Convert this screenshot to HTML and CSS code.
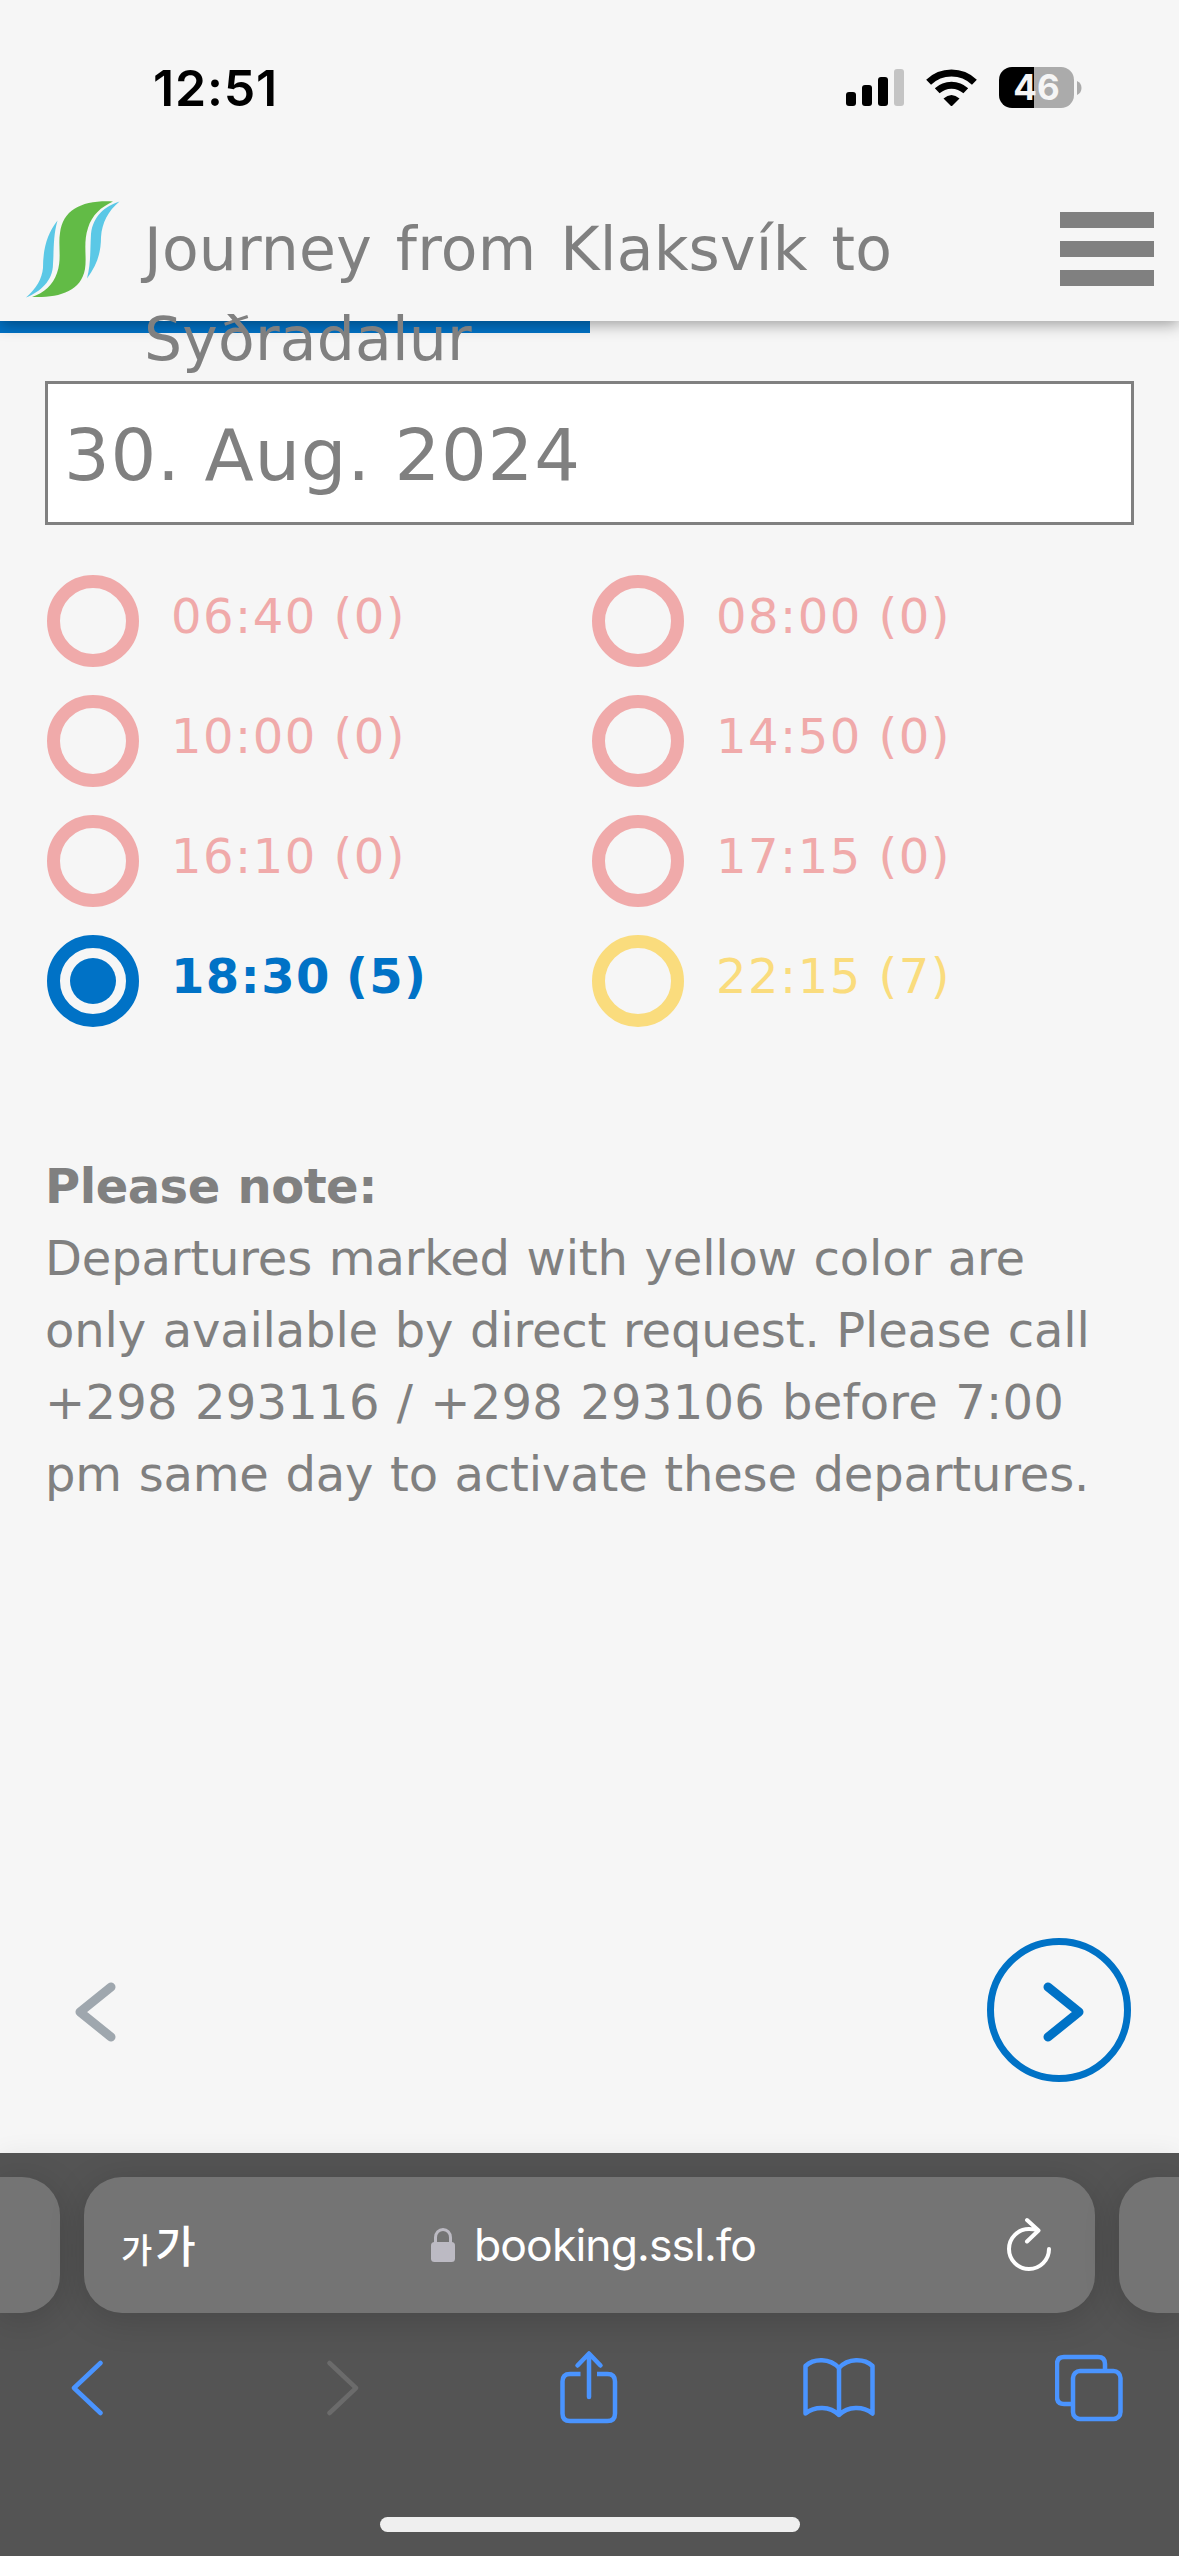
FILE: index.html
```html
<!DOCTYPE html>
<html lang="en">
<head>
	<meta charset="utf-8">
	<title>Journey from Klaksvík to Syðradalur</title>
	<link rel="stylesheet" href="styles.css">
</head>
<body>
<div class="statusbar">
	<span class="clock">12:51</span>
	<div class="status-icons">
		<svg class="signal" width="58" height="37" viewBox="0 0 58 37">
			<rect x="0" y="23" width="10" height="14" rx="3"/>
			<rect x="16" y="16" width="10" height="21" rx="3"/>
			<rect x="32" y="8" width="10" height="29" rx="3"/>
			<rect x="48" y="0" width="10" height="37" rx="3" fill="#c4c4c4"/>
		</svg>
		<svg class="wifi" width="51" height="37" viewBox="0 0 51 37">
			<path d="M2.6 13.2A33 33 0 0 1 48.4 13.2" fill="none" stroke="#000" stroke-width="7"/>
			<path d="M11.2 21.8A21 21 0 0 1 39.8 21.8" fill="none" stroke="#000" stroke-width="7"/>
			<path d="M17.5 29.5Q25.5 22.5 33.5 29.5L25.5 37.5Z"/>
		</svg>
		<div class="battery"><span>46</span></div>
		<svg class="battery-tip" width="5" height="14" viewBox="0 0 5 14"><path d="M0 0Q4.5 2 4.5 7T0 14Z" fill="#ababab"/></svg>
	</div>
</div>

<div class="header">
	<svg class="logo" width="94" height="97" viewBox="0 0 94 97">
		<path d="M31.500 19.500C21 33 17 48 17 67C16 78 10 88 0 96.500C14 91 27 80 27 63C28 50 27 35 31.500 19.500Z" fill="#5bc8e6"/>
		<path d="M93.500 .5C79 5 67 15 65 33C64 50 65 62 61 77.500C71 64 75 52 75 36C76 22 82 10 93.500 .5Z" fill="#5bc8e6"/>
		<path d="M87 .5C57 -1 37 8 34 32C32 45 36 58 31 72C27 84 18 92 6 96C32 97 55 91 59 68C61 55 57 42 62 27C66 14 75 6 87 .5Z" fill="#62bb46"/>
	</svg>
	<h1>Journey from Klaksvík to Syðradalur</h1>
	<div class="menu"><i></i><i></i><i></i></div>
</div>
<div class="progress"><div class="progress-done"></div></div>

<div class="content">
	<div class="date">30. Aug. 2024</div>
	<div class="times">
		<div class="time full"><span class="radio"></span><label>06:40 (0)</label></div>
		<div class="time full"><span class="radio"></span><label>08:00 (0)</label></div>
		<div class="time full"><span class="radio"></span><label>10:00 (0)</label></div>
		<div class="time full"><span class="radio"></span><label>14:50 (0)</label></div>
		<div class="time full"><span class="radio"></span><label>16:10 (0)</label></div>
		<div class="time full"><span class="radio"></span><label>17:15 (0)</label></div>
		<div class="time on"><span class="radio"></span><label>18:30 (5)</label></div>
		<div class="time request"><span class="radio"></span><label>22:15 (7)</label></div>
	</div>
	<div class="note">
		<b>Please note:</b><br>
		Departures marked with yellow color are<br>
		only available by direct request. Please call<br>
		<span class="phones">+298 293116 / +298 293106 before 7:00</span><br>
		pm same day to activate these departures.
	</div>
	<div class="pager">
		<div class="prev">
			<svg width="42" height="60" viewBox="0 0 42 60"><path d="M36 5L5 30L36 55"/></svg>
		</div>
		<div class="next">
			<svg width="42" height="60" viewBox="0 0 42 60"><path d="M5 5L36 30L5 55"/></svg>
		</div>
	</div>
</div>

<div class="browser">
	<div class="tabs">
		<div class="tab side"></div>
		<div class="tab address">
			<div class="lang"><small>가</small><span>가</span></div>
			<div class="url">
				<svg width="24" height="34" viewBox="0 0 24 34">
					<path d="M4.500 16V9.500a7.500 8 0 0 1 15 0V16" fill="none" stroke="#bcbac3" stroke-width="3"/>
					<rect x="0" y="14" width="24" height="20" rx="3.500" fill="#bcbac3"/>
				</svg>
				<span>booking.ssl.fo</span>
			</div>
			<svg class="reload" width="46" height="56" viewBox="0 0 46 56">
				<path d="M32 13.500C28 12 25.500 12 23 12A20 20 0 1 0 43 32M21 3L32.500 13.500L21 24.500"/>
			</svg>
		</div>
		<div class="tab side"></div>
	</div>
	<div class="tools">
		<svg width="32" height="56" viewBox="0 0 32 56"><path d="M29.500 3L3 28L29.500 53"/></svg>
		<svg class="off" width="32" height="56" viewBox="0 0 32 56"><path d="M2.500 3L29 28L2.500 53"/></svg>
		<svg class="share" width="58" height="74" viewBox="0 0 58 74"><path class="butt" d="M20.500 24H10Q2.500 24 2.500 31.500V63.500Q2.500 71 10 71H47.500Q55 71 55 63.500V31.500Q55 24 47.500 24H37"/><path d="M29 47V4M17.500 15.500L29 3.500L40.500 15.500"/></svg>
		<svg width="72" height="62" viewBox="0 0 72 62"><path d="M36 11C27 1 11 1 2.500 9V56.500C12 49 27 49 36 58C45 49 60 49 69.500 56.500V9C61 1 45 1 36 11V58"/></svg>
		<svg width="68" height="68" viewBox="0 0 68 68"><path class="butt" d="M50 16V10Q50 3 43 3H9Q2 3 2 10V43Q2 50 9 50H17"/><rect x="18" y="17" width="47.500" height="48" rx="7"/></svg>
	</div>
	<div class="home"></div>
</div>
</body>
</html>
```

FILE: styles.css
```css
*{
	margin: 0;
	padding: 0;
	box-sizing: border-box;
}
body{
	width: 1179px;
	height: 2556px;
	overflow: hidden;
	display: flex;
	flex-direction: column;
	background: #f6f6f6;
	color: #808080;
	font-family: "DejaVu Sans", Verdana, sans-serif;
}
svg{
	display: block;
	flex: none;
}

/* status bar */
.statusbar{
	height: 177px;
	padding: 57px 97px 0 153px;
	display: flex;
	justify-content: space-between;
	color: #000;
	font-family: Inter, sans-serif;
}
.clock{
	font-size: 50px;
	line-height: 62px;
	font-weight: 600;
	letter-spacing: .8px;
}
.status-icons{
	display: flex;
	align-items: center;
	height: 61px;
}
.wifi{
	margin: 0 22px;
}
.battery{
	width: 75px;
	height: 41px;
	border-radius: 13px;
	background: linear-gradient(90deg, #000 35px, #ababab 35px);
	color: #f5f5f5;
	font-size: 35px;
	font-weight: 700;
	line-height: 41px;
	text-align: center;
}
.battery-tip{
	margin-left: 3px;
}

/* header */
.header{
	position: relative;
	z-index: 1;
	height: 144px;
	padding: 24px 25px 0 26px;
	display: flex;
	box-shadow: 0 3px 15px rgba(0,0,0,.38);
	clip-path: inset(0 0 -90px 0);
	background: #f6f6f6;
}
.header h1{
	flex: 1;
	height: 120px;
	margin-left: 24px;
	padding: 3px 130px 0 0;
	font-size: 60px;
	font-weight: normal;
	line-height: 90px;
	letter-spacing: .2px;
	word-spacing: 4.7px;
}
.menu{
	display: flex;
	flex-direction: column;
	gap: 13px;
	padding-top: 11px;
}
.menu i{
	width: 94px;
	height: 16px;
	background: #808080;
}
.progress{
	height: 12px;
}
.progress-done{
	width: 590px;
	height: 12px;
	background: #0072c6;
}

/* booking */
.content{
	flex: 1;
	padding: 48px 45px 0;
	display: flex;
	flex-direction: column;
}
.date{
	height: 144px;
	border: 3px solid #808080;
	background: #fff;
	padding-left: 16px;
	font-size: 72px;
	line-height: 142px;
	letter-spacing: .75px;
}
.times{
	display: grid;
	grid-template-columns: 545px 1fr;
	grid-auto-rows: 120px;
	padding: 50px 2px 0;
}
.time{
	display: flex;
}
.radio{
	width: 92px;
	height: 92px;
	border: 13px solid;
	border-radius: 50%;
}
.time label{
	margin-left: 32px;
	font-size: 48px;
	line-height: 82px;
	letter-spacing: 1.5px;
}
.full{
	color: #f0aaaa;
}
.request{
	color: #fadc7d;
}
.on{
	color: #0072c6;
	font-weight: bold;
}
.on .radio{
	padding: 10px;
	background: currentColor content-box;
}
.on label{
	letter-spacing: 1.4px;
	word-spacing: -3px;
}
.note{
	margin-top: 95px;
	font-size: 48px;
	line-height: 72px;
	letter-spacing: -.15px;
	word-spacing: 1.6px;
	white-space: nowrap;
}
.note b{
	letter-spacing: -.5px;
}
.note .phones{
	letter-spacing: .25px;
}
.pager{
	margin-top: auto;
	padding: 0 3px 71px 0;
	display: flex;
	justify-content: space-between;
}
.pager path{
	fill: none;
	stroke: currentColor;
	stroke-width: 9;
	stroke-linecap: round;
	stroke-linejoin: round;
}
.prev{
	color: #9fa7ae;
	padding: 44px 0 0 30px;
}
.next{
	width: 144px;
	height: 144px;
	padding: 37px 0 0 49px;
	border: 7px solid #0072c6;
	border-radius: 50%;
	color: #0072c6;
}

/* browser bottom bar */
.browser{
	height: 403px;
	padding-top: 24px;
	background: #545454;
	box-shadow: 0 0 24px rgba(0,0,0,.06);
	overflow: hidden;
}
.tabs{
	display: flex;
	gap: 24px;
}
.tab{
	height: 136px;
	border-radius: 38px;
	background: #747474;
	box-shadow: 0 6px 36px rgba(0,0,0,.16);
}
.side{
	width: 60px;
	border-radius: 0 38px 38px 0;
}
.address + .side{
	border-radius: 38px 0 0 38px;
}
.address{
	width: 1011px;
	padding: 0 43px 0 37px;
	display: flex;
	justify-content: space-between;
	align-items: center;
	color: #fff;
}
.lang{
	width: 60px;
	margin-top: -2px;
	font-family: "Noto Sans CJK KR", sans-serif;
	font-weight: 500;
	font-size: 44px;
	white-space: nowrap;
}
.lang small{
	margin-right: 3px;
	font-size: 34px;
}
.url{
	display: flex;
	align-items: center;
	gap: 19px;
	font-family: Inter, sans-serif;
	font-size: 44.5px;
	letter-spacing: -.9px;
}
.reload{
	fill: none;
	stroke: #fff;
	stroke-width: 4;
	stroke-linecap: round;
	stroke-linejoin: round;
}
.tools{
	height: 150px;
	display: grid;
	grid-template-columns: 173px 340px 152px 348px 151px;
	justify-items: center;
	align-items: center;
}
.tools svg{
	fill: none;
	stroke: #4a94ff;
	stroke-width: 4.5;
	stroke-linecap: round;
	stroke-linejoin: round;
}
.tools .off{
	stroke: #6b6b6b;
}
.tools .share{
	margin-bottom: 3px;
}
.tools .butt{
	stroke-linecap: butt;
}
.home{
	width: 420px;
	height: 15px;
	margin: 54px auto 0;
	border-radius: 8px;
	background: #efefef;
}
```
